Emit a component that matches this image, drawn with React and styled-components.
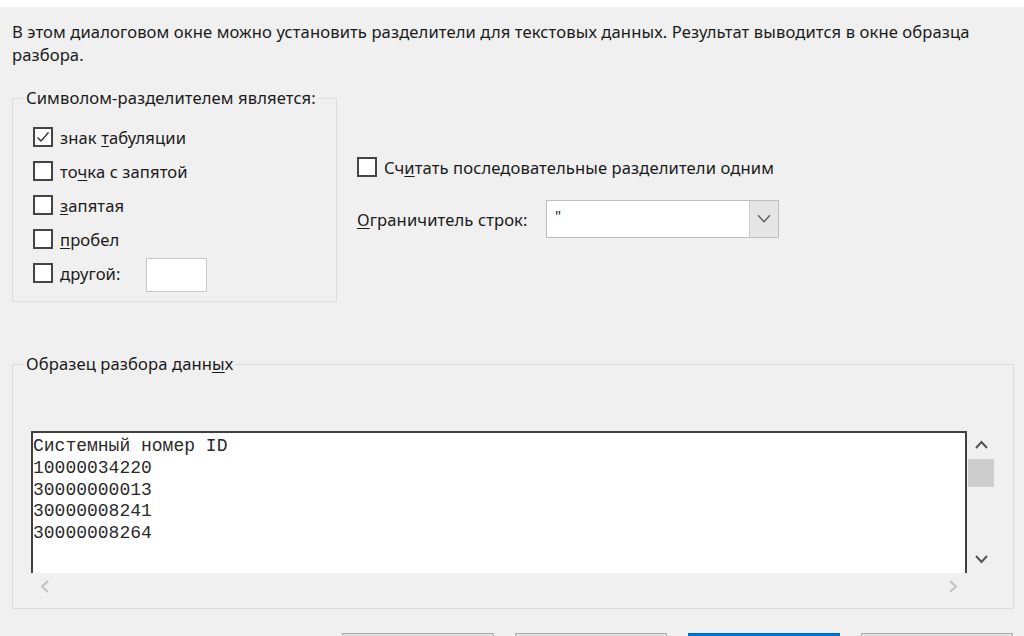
import React from "react";
import styled, { createGlobalStyle } from "styled-components";

const GlobalStyle = createGlobalStyle`
  html, body {
    margin: 0;
    padding: 0;
    overflow: hidden;
    background: #f0f0f0;
  }
  body {
    font-family: "Noto Sans", "Segoe UI", sans-serif;
    font-size: 16.6px;
    letter-spacing: 0.1px;
    color: #1b1b1b;
  }
`;

const Page = styled.div`
  width: 1024px;
  height: 636px;
  overflow: hidden;
  display: flex;
  flex-direction: column;
  background: #f0f0f0;
`;

const TopStrip = styled.div`
  flex: none;
  height: 7px;
  background: #ffffff;
`;

const Intro = styled.p`
  flex: none;
  margin: 13px 0 0;
  padding: 0 12px;
  line-height: 23px;
  white-space: nowrap;
`;

const SettingsRow = styled.div`
  flex: none;
  display: flex;
  align-items: flex-start;
  gap: 20px;
  margin-top: 22px;
  padding-left: 12px;
`;

const Group = styled.fieldset`
  margin: 0;
  min-width: 0;
  box-sizing: border-box;
  border: 1px solid #dcdcdc;
  width: ${(p) => p.$width}px;
  padding: ${(p) => p.$padding};
`;

const Legend = styled.legend`
  padding: 0 2px;
  margin-left: ${(p) => p.$shift}px;
  line-height: 20px;
`;

const Acc = styled.u`
  text-decoration: underline;
  text-underline-offset: 2px;
`;

const CheckRow = styled.label`
  display: flex;
  align-items: center;
  gap: 7px;
  height: 34px;
`;

const Box = styled.span`
  flex: none;
  width: 20px;
  height: 20px;
  box-sizing: border-box;
  border: 2px solid #444444;
  background: #ffffff;
  display: flex;
  align-items: center;
  justify-content: center;
`;

const OtherText = styled.span`
  width: 79px;
`;

const OtherInput = styled.span`
  width: 61px;
  height: 34px;
  margin-top: 4px;
  box-sizing: border-box;
  border: 1px solid #c9c9c9;
  background: #ffffff;
`;

const RightCol = styled.div`
  display: flex;
  flex-direction: column;
  gap: 16px;
  padding-top: 62px;
`;

const QualifierRow = styled.div`
  display: flex;
  align-items: center;
  height: 38px;
`;

const QualifierLabel = styled.span`
  width: 189px;
`;

const Select = styled.div`
  width: 233px;
  height: 38px;
  box-sizing: border-box;
  border: 1px solid #bdbdbd;
  background: #ffffff;
  display: flex;
`;

const SelectValue = styled.span`
  flex: 1;
  padding: 4px 0 0 8px;
  line-height: 20px;
  font-size: 15px;
`;

const SelectButton = styled.span`
  width: 28px;
  background: #e5e5e5;
  border-left: 1px solid #cccccc;
  display: flex;
  align-items: center;
  justify-content: center;
`;

const PreviewGroup = styled(Group)`
  margin: 52px 0 0 12px;
  flex: none;
`;

const PreviewGrid = styled.div`
  display: grid;
  grid-template-columns: 936px 28px;
  grid-template-rows: 142px 27px;
`;

const DataBox = styled.div`
  box-sizing: border-box;
  background: #ffffff;
  border: 2px solid #404040;
  border-bottom: none;
  padding: 3px 0 0 0;
  overflow: hidden;
  font-family: "Liberation Mono", "Courier New", monospace;
  font-size: 18px;
  letter-spacing: 0;
  line-height: 21.75px;
  color: #2a2a2a;
  white-space: pre;
`;

const VScroll = styled.div`
  display: flex;
  flex-direction: column;
  align-items: center;
`;

const ArrowZone = styled.span`
  flex: none;
  width: ${(p) => p.$w || 28}px;
  height: ${(p) => p.$h || 28}px;
  display: flex;
  align-items: center;
  justify-content: center;
`;

const Thumb = styled.span`
  flex: none;
  width: 26px;
  height: 28px;
  background: #cdcdcd;
`;

const Spacer = styled.span`
  flex: 1;
`;

const HScroll = styled.div`
  display: flex;
  align-items: center;
  justify-content: space-between;
`;

const ButtonRow = styled.div`
  flex: none;
  display: flex;
  justify-content: flex-end;
  gap: 21px;
  margin-top: 24px;
  padding-right: 11px;
`;

const Button = styled.button`
  width: 152px;
  height: 34px;
  box-sizing: border-box;
  border: 1px solid ${(p) => (p.$primary ? "#0067c0" : "#adadad")};
  background: ${(p) => (p.$primary ? "#0078d7" : "#e1e1e1")};
`;

const Check = () => (
  <svg width="16" height="16" viewBox="0 0 16 16">
    <polyline points="2.5,8.5 6,12 13.5,3.5" fill="none" stroke="#333" strokeWidth="1.4" />
  </svg>
);

const Chevron = ({ dir, color, size = 13, stroke = 2 }) => {
  const pts = {
    up: "1,9 6.5,3 12,9",
    down: "1,3 6.5,9 12,3",
    left: "9,1 3,6.5 9,12",
    right: "3,1 9,6.5 3,12",
  }[dir];
  return (
    <svg width={size} height={size} viewBox="0 0 13 13">
      <polyline points={pts} fill="none" stroke={color} strokeWidth={stroke} />
    </svg>
  );
};

const options = [
  { text: <>знак <Acc>т</Acc>абуляции</>, checked: true },
  { text: <>то<Acc>ч</Acc>ка с запятой</> },
  { text: <><Acc>з</Acc>апятая</> },
  { text: <><Acc>п</Acc>робел</> },
];

const rows = ["Системный номер ID", "10000034220", "30000000013", "30000008241", "30000008264"];

export default function App() {
  return (
    <Page>
      <GlobalStyle />
      <TopStrip />
      <Intro>
        В этом диалоговом окне можно установить разделители для текстовых данных. Результат выводится в окне образца
        <br />
        разбора.
      </Intro>

      <SettingsRow>
        <Group $width={325} $padding="12px 10px 11px 20px">
          <Legend $shift={-9}>Символом-разделителем является:</Legend>
          {options.map((o, i) => (
            <CheckRow key={i}>
              <Box>{o.checked && <Check />}</Box>
              <span>{o.text}</span>
            </CheckRow>
          ))}
          <CheckRow>
            <Box />
            <OtherText><Acc>д</Acc>ругой:</OtherText>
            <OtherInput />
          </CheckRow>
        </Group>

        <RightCol>
          <CheckRow>
            <Box />
            <span>Сч<Acc>и</Acc>тать последовательные разделители одним</span>
          </CheckRow>
          <QualifierRow>
            <QualifierLabel><Acc>О</Acc>граничитель строк:</QualifierLabel>
            <Select>
              <SelectValue>"</SelectValue>
              <SelectButton>
                <Chevron dir="down" color="#5a5a5a" size={14} stroke={1.2} />
              </SelectButton>
            </Select>
          </QualifierRow>
        </RightCol>
      </SettingsRow>

      <PreviewGroup $width={1002} $padding="57px 0 8px 18px">
        <Legend $shift={-7}>Образец разбора данн<Acc>ы</Acc>х</Legend>
        <PreviewGrid>
          <DataBox>{rows.join("\n")}</DataBox>
          <VScroll>
            <ArrowZone>
              <Chevron dir="up" color="#555" />
            </ArrowZone>
            <Thumb />
            <Spacer />
            <ArrowZone>
              <Chevron dir="down" color="#555" />
            </ArrowZone>
          </VScroll>
          <HScroll>
            <ArrowZone $h={27}>
              <Chevron dir="left" color="#c2c2c2" />
            </ArrowZone>
            <ArrowZone $h={27}>
              <Chevron dir="right" color="#c2c2c2" />
            </ArrowZone>
          </HScroll>
        </PreviewGrid>
      </PreviewGroup>

      <ButtonRow>
        <Button aria-label="Отмена" />
        <Button aria-label="Назад" />
        <Button $primary aria-label="Далее" />
        <Button aria-label="Готово" />
      </ButtonRow>
    </Page>
  );
}
